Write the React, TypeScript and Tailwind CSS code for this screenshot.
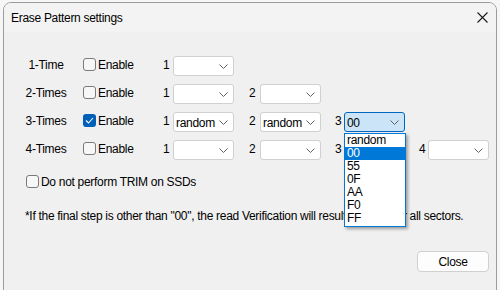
import React from "react";

const Chevron = () => (
  <svg width="9" height="5" viewBox="0 0 9 5" className="block">
    <path d="M0.5 0.5 L4.5 4.5 L8.5 0.5" fill="none" stroke="#606060" strokeWidth="1" />
  </svg>
);

const Combo = ({ value, active }: { value?: string; active?: boolean }) => (
  <div
    className={
      "w-[61px] h-[20px] rounded-[3px] border flex items-center justify-between pl-[2px] pr-[5px] " +
      (active ? "bg-[#cce4f7] border-[#0067c0]" : "bg-white border-[#d0d0d0]")
    }
  >
    <span className="leading-[14px] pt-[1px]">{value ?? ""}</span>
    <Chevron />
  </div>
);

const Check = ({ checked }: { checked?: boolean }) =>
  checked ? (
    <div className="w-[13px] h-[13px] rounded-[3px] bg-[#005fb8] flex items-center justify-center shrink-0">
      <svg width="9" height="7" viewBox="0 0 9 7">
        <path d="M1 3.5 L3.5 6 L8 1" fill="none" stroke="white" strokeWidth="1.1" />
      </svg>
    </div>
  ) : (
    <div className="w-[13px] h-[13px] rounded-[3px] border border-[#7a7a7a] bg-[#f7f7f7] shrink-0" />
  );

export default function App() {
  const rows = [
    { label: "1-Time", checked: false, n: 1, vals: [""] },
    { label: "2-Times", checked: false, n: 2, vals: ["", ""] },
    { label: "3-Times", checked: true, n: 3, vals: ["random", "random", "00"] },
    { label: "4-Times", checked: false, n: 4, vals: ["", "", "", ""] },
  ];
  const groupCls = ["", "ml-[15px]", "ml-[14px]", "ml-[14px]"];
  const digitW = ["w-[10px]", "w-[11px]", "w-[9px]", "w-[9px]"];
  return (
    <div
      className="relative w-[500px] h-[290px] bg-[#f6f6f6] overflow-hidden text-[12px] text-black tracking-[-0.3px]"
      style={{ fontFamily: '"Liberation Sans", Arial, sans-serif' }}
    >
      <div className="ml-[3px] mt-[2px] w-[494px] h-[290px] rounded-t-[8px] border border-[#9c9c9c] bg-[#f0f0f0] flex flex-col overflow-hidden">
        <div className="h-[29px] bg-[#f3f3f3] flex items-center justify-between pl-[7px] pr-[8px]">
          <span className="leading-[14px]">Erase Pattern settings</span>
          <svg width="11" height="11" viewBox="0 0 11 11">
            <path d="M0.5 0.5 L10.5 10.5 M10.5 0.5 L0.5 10.5" stroke="#1a1a1a" strokeWidth="1.1" />
          </svg>
        </div>
        <div className="flex flex-col pt-[24px]">
          {rows.map((r, ri) => (
            <div key={r.label} className={(ri < 3 ? "h-[28px]" : "h-[20px]") + " flex items-start pl-[12px]"}>
              <div className="w-[60px] h-[18px] flex items-center justify-center">{r.label}</div>
              <div className="w-[80px] h-[18px] ml-[7px] flex items-center gap-[2px]">
                <div className="-mt-[2px]">
                  <Check checked={r.checked} />
                </div>
                <span>Enable</span>
              </div>
              {r.vals.map((v, i) => (
                <div key={i} className={"flex items-start " + groupCls[i]}>
                  <span className={digitW[i] + " h-[17px] flex items-center"}>{i + 1}</span>
                  <Combo value={v} active={r.n === 3 && i === 2} />
                </div>
              ))}
            </div>
          ))}
          <div className="flex items-center gap-[2px] pl-[22px] mt-[13px] h-[16px]">
            <Check />
            <span className="pt-[1px]">Do not perform TRIM on SSDs</span>
          </div>
          <div className="pl-[21px] mt-[19px] leading-[16px] whitespace-nowrap">
            *If the final step is other than "00", the read Verification will result in errors for all sectors.
          </div>
          <div className="flex justify-end pr-[7px] mt-[27px]">
            <button className="w-[72px] h-[21px] rounded-[4px] border border-[#d0d0d0] bg-[#fdfdfd] leading-[14px]">
              Close
            </button>
          </div>
        </div>
      </div>
      <div className="absolute left-[344px] top-[133px] w-[62px] h-[94px] border border-[#0078d7] bg-white shadow-[2px_2px_3px_rgba(0,0,0,0.35)] flex flex-col leading-[13px]">
        {["random", "00", "55", "0F", "AA", "F0", "FF"].map((o) => (
          <div key={o} className={"h-[13px] pl-[2px] " + (o === "00" ? "bg-[#0078d7] text-white" : "")}>
            {o}
          </div>
        ))}
      </div>
    </div>
  );
}
